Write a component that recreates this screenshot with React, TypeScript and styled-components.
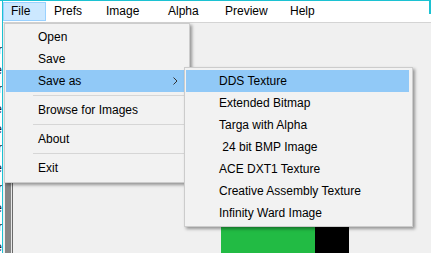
import React from "react";
import styled, { createGlobalStyle } from "styled-components";

const GlobalStyle = createGlobalStyle`
  html, body {
    margin: 0;
    padding: 0;
    background: #f0f0f0;
  }
  * {
    box-sizing: border-box;
  }
`;

const CYAN = "#1cc2d2";

const Root = styled.div`
  position: relative;
  width: 431px;
  height: 253px;
  display: flex;
  overflow: hidden;
  border-top: 1px solid ${CYAN};
  background: #ffffff;
  font-family: "Segoe UI", "Liberation Sans", Arial, sans-serif;
  font-size: 12px;
  color: #000000;
`;

const BehindStrip = styled.div`
  width: 2px;
  overflow: hidden;
  display: flex;
  flex-direction: column;
  padding-top: 40px;
  background: #ffffff;
  color: #1a1a1a;
`;

const BehindLine = styled.div`
  height: 19.7px;
  line-height: 19.7px;
  display: flex;
  justify-content: flex-end;
`;

const AppWindow = styled.div`
  flex: 1;
  display: flex;
  flex-direction: column;
  border-left: 1px solid ${CYAN};
`;

const MenuBar = styled.div`
  position: relative;
  height: 22px;
  display: flex;
  align-items: center;
  background: #ffffff;
  border-bottom: 1px solid #d4d4d4;

  &::after {
    content: "";
    position: absolute;
    right: 0;
    top: 0;
    width: 2px;
    height: 13px;
    background: ${CYAN};
  }
`;

const BarItem = styled.div<{ $width: number; $active?: boolean }>`
  width: ${(p) => p.$width}px;
  height: 19px;
  line-height: 17px;
  padding-left: 7px;
  border: 1px solid ${(p) => (p.$active ? "#99d1ff" : "transparent")};
  background: ${(p) => (p.$active ? "#cce8ff" : "transparent")};
  white-space: nowrap;
`;

const Body = styled.div`
  flex: 1;
  display: flex;
  background: #f0f0f0;
`;

const FrameBar = styled.div<{ $width: number; $color: string }>`
  width: ${(p) => p.$width}px;
  background: ${(p) => p.$color};
`;

const Canvas = styled.div`
  flex: 1;
  display: flex;
  align-items: flex-end;
  padding-left: 208px;
`;

const Swatch = styled.div<{ $width: number; $color: string }>`
  width: ${(p) => p.$width}px;
  height: 27px;
  background: ${(p) => p.$color};
`;

const DropMenu = styled.div<{ $left: number; $top: number; $width: number }>`
  position: absolute;
  left: ${(p) => p.$left}px;
  top: ${(p) => p.$top}px;
  width: ${(p) => p.$width}px;
  display: flex;
  flex-direction: column;
  background: #f2f2f2;
  border: 1px solid #cccccc;
  box-shadow: 2px 2px 3px rgba(0, 0, 0, 0.38);
`;

const FileMenu = styled(DropMenu)`
  padding: 2px 1px 3px 1px;
`;

const SubMenu = styled(DropMenu)`
  padding: 2px 3px 2px 1px;
`;

const MenuItem = styled.div<{ $active?: boolean; $indent: number }>`
  height: 22px;
  line-height: 22px;
  display: flex;
  align-items: center;
  padding-left: ${(p) => p.$indent}px;
  padding-right: 10px;
  background: ${(p) => (p.$active ? "#91c9f7" : "transparent")};
  white-space: pre;
`;

const Arrow = styled.svg`
  margin-left: auto;
`;

const Separator = styled.div`
  height: 7px;
  display: flex;
  align-items: center;
  padding-left: 27px;
  padding-right: 2px;

  &::before {
    content: "";
    flex: 1;
    height: 1px;
    background: #d6d6d6;
  }
`;

const barItems = [
  { label: "File", width: 43, active: true },
  { label: "Prefs", width: 52 },
  { label: "Image", width: 62 },
  { label: "Alpha", width: 57 },
  { label: "Preview", width: 65 },
  { label: "Help", width: 60 },
];

const saveFormats = [
  "DDS Texture",
  "Extended Bitmap",
  "Targa with Alpha",
  " 24 bit BMP Image",
  "ACE DXT1 Texture",
  "Creative Assembly Texture",
  "Infinity Ward Image",
];

const behindText = ["r", "e", "r", "e", "e", "r", "e", "r", "e", "r", "e"];

const App: React.FC = () => {
  return (
    <>
      <GlobalStyle />
      <Root>
        <BehindStrip>
          {behindText.map((t, i) => (
            <BehindLine key={i}>{t}</BehindLine>
          ))}
        </BehindStrip>
        <AppWindow>
          <MenuBar>
            {barItems.map((item) => (
              <BarItem key={item.label} $width={item.width} $active={item.active}>
                {item.label}
              </BarItem>
            ))}
          </MenuBar>
          <Body>
            <FrameBar $width={2} $color="#f0f0f0" />
            <FrameBar $width={6} $color="#868686" />
            <FrameBar $width={1} $color="#e8e8e8" />
            <FrameBar $width={1} $color="#6b6b6b" />
            <Canvas>
              <Swatch $width={94} $color="#22bb44" />
              <Swatch $width={34} $color="#000000" />
            </Canvas>
          </Body>
        </AppWindow>

        <FileMenu $left={4} $top={22} $width={186}>
          <MenuItem $indent={32}>{"Open"}</MenuItem>
          <MenuItem $indent={32}>{"Save"}</MenuItem>
          <MenuItem $indent={32} $active>
            {"Save as"}
            <Arrow width="5" height="8" viewBox="0 0 5 8">
              <polyline points="0.5,0.5 4,4 0.5,7.5" fill="none" stroke="#333" strokeWidth="1" />
            </Arrow>
          </MenuItem>
          <Separator />
          <MenuItem $indent={32}>{"Browse for Images"}</MenuItem>
          <Separator />
          <MenuItem $indent={32}>{"About"}</MenuItem>
          <Separator />
          <MenuItem $indent={32}>{"Exit"}</MenuItem>
        </FileMenu>

        <SubMenu $left={184} $top={66} $width={229}>
          {saveFormats.map((label, i) => (
            <MenuItem key={label} $indent={33} $active={i === 0}>
              {label}
            </MenuItem>
          ))}
        </SubMenu>
      </Root>
    </>
  );
};

export default App;
